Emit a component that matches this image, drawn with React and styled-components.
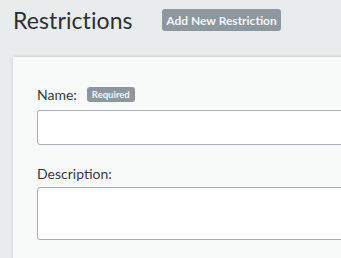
import React from "react";
import styled, { createGlobalStyle } from "styled-components";

const GlobalStyle = createGlobalStyle`
  html, body {
    margin: 0;
    padding: 0;
    background: #e9eced;
    font-family: "Lato", "Noto Sans", sans-serif;
    overflow: hidden;
  }
`;

function App() {
  return (
    <>
      <GlobalStyle />
      <Page>
        <Header>
          <Title>Restrictions</Title>
          <AddButton type="button">Add New Restriction</AddButton>
        </Header>

        <Card>
          <Field>
            <LabelRow $space={7}>
              <Label>Name:</Label>
              <Badge>Required</Badge>
            </LabelRow>
            <Input type="text" />
          </Field>

          <Field>
            <LabelRow $space={5}>
              <Label>Description:</Label>
            </LabelRow>
            <TextArea />
          </Field>
        </Card>
      </Page>
    </>
  );
}

export default App;

const Page = styled.div`
  width: 341px;
  height: 258px;
  overflow: hidden;
`;

const Header = styled.div`
  display: flex;
  align-items: center;
  height: 40px;
  padding-left: 13px;
`;

const Title = styled.h1`
  margin: 0;
  width: 149px;
  font-size: 23px;
  font-weight: 400;
  color: #2a3038;
  letter-spacing: 0.1px;
`;

const AddButton = styled.button`
  height: 22px;
  width: 119px;
  padding: 0;
  border: none;
  border-radius: 3px;
  background: #8c979f;
  color: #f4f6f7;
  font-family: inherit;
  font-size: 12px;
  font-weight: 700;
  cursor: pointer;
`;

const Card = styled.div`
  margin: 17px 0 0 13px;
  width: 500px;
  height: 220px;
  box-sizing: border-box;
  padding: 29px 0 0 24px;
  background: #f8f9f9;
  box-shadow: 0 -1px 3px rgba(0, 0, 0, 0.12);
`;

const Field = styled.div`
  display: flex;
  flex-direction: column;
  margin-bottom: 20px;
`;

const LabelRow = styled.div`
  display: flex;
  align-items: center;
  gap: 10px;
  height: 17px;
  margin-bottom: ${(p) => p.$space}px;
`;

const Label = styled.label`
  font-size: 14px;
  color: #363b40;
`;

const Badge = styled.span`
  display: inline-flex;
  align-items: center;
  height: 15px;
  padding: 0 5px;
  border-radius: 3px;
  background: #8c979f;
  color: #f4f6f7;
  font-size: 9.5px;
  font-weight: 700;
`;

const Input = styled.input`
  box-sizing: border-box;
  width: 400px;
  height: 35px;
  margin: 0;
  border: 1px solid #a9b1b6;
  border-radius: 3px;
  background: #ffffff;
`;

const TextArea = styled.textarea`
  box-sizing: border-box;
  width: 400px;
  height: 53px;
  margin: 0;
  border: 1px solid #a9b1b6;
  border-radius: 3px;
  background: #ffffff;
  resize: none;
`;
